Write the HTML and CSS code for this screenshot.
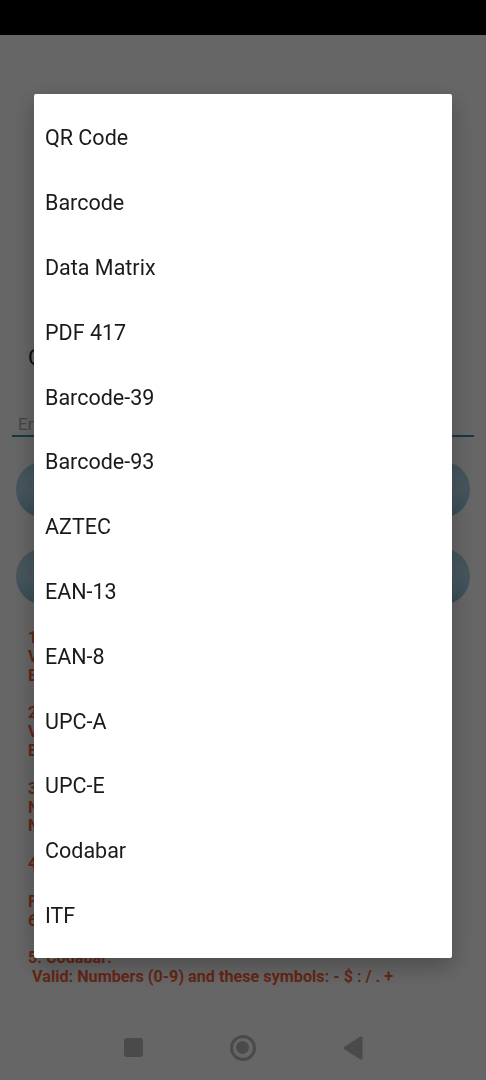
FILE: index.html
```html
<!DOCTYPE html>
<html>
<head>
  <meta charset="utf-8">
  <meta name="viewport" content="width=device-width,initial-scale=1">
  <title>Barcode generator</title>
  <link rel="stylesheet" href="styles.css">
</head>
<body>
  <div class="status"></div>

  <main class="app">
    <p class="label">Choose the code type</p>
    <div class="field"><span class="hint">Enter the text to encode</span></div>
    <button class="btn">Generate</button>
    <button class="btn">Save to gallery</button>

    <div class="rules">
      <p>1. QR Code, Data Matrix, PDF 417, AZTEC:
Valid: Any text, numbers and symbols
Example: https://www.example.com</p>
      <p>2. Barcode, Barcode-39, Barcode-93:
Valid: Letters (A-Z) and numbers (0-9)
Example: CODE-39</p>
      <p>3. EAN-13, EAN-8, UPC-A, UPC-E:
Numbers (0-9) only
Number of digits: 12, 7, 11, 7</p>
      <p>4. ITF:
      Valid: Numbers (0-9) only
For ITF the number of digits must be even
6, 8, 10, 12 or 14 digits</p>
      <p>5. Codabar:
 Valid: Numbers (0-9) and these symbols: - $ : / . +</p>
    </div>
  </main>

  <nav class="navbar">
    <span class="nav-recent"></span>
    <span class="nav-home"><span></span></span>
    <svg class="nav-back" width="20" height="24" viewBox="0 0 20 24">
      <polygon points="18,2 18,22 2,12" fill="#b8b8b8" stroke="#b8b8b8" stroke-width="3" stroke-linejoin="round"/>
    </svg>
  </nav>

  <div class="scrim">
    <ul class="dialog">
      <li>QR Code</li>
      <li>Barcode</li>
      <li>Data Matrix</li>
      <li>PDF 417</li>
      <li>Barcode-39</li>
      <li>Barcode-93</li>
      <li>AZTEC</li>
      <li>EAN-13</li>
      <li>EAN-8</li>
      <li>UPC-A</li>
      <li>UPC-E</li>
      <li>Codabar</li>
      <li>ITF</li>
    </ul>
  </div>
</body>
</html>
```

FILE: styles.css
```css
html, body {
  margin: 0;
  padding: 0;
}

* {
  box-sizing: border-box;
}

body {
  background: #fff;
  color: #212121;
  display: flex;
  flex-direction: column;
  font-family: Roboto, 'Liberation Sans', sans-serif;
  min-height: 100vh;
}

.status {
  background: #000;
  height: 35px;
  position: relative;
  z-index: 2;
}

.app {
  display: flex;
  flex-direction: column;
}

.label {
  font-size: 22px;
  line-height: 26px;
  margin: 310px 0 0 28px;
}

.field {
  border-bottom: 2px solid #2f8fb5;
  color: #aaa;
  font-size: 17px;
  line-height: 22px;
  margin: 42px 12px 0;
  padding: 0 6px;
}

.btn {
  background: radial-gradient(ellipse at 50% 40%, #eef8ff 0%, #c4e4f4 55%, #86b6cf 100%);
  border: 0;
  border-radius: 29px;
  color: #0d4a66;
  font-family: inherit;
  font-size: 18px;
  height: 57px;
  margin: 24px 16px 0;
}

.btn + .btn {
  margin-top: 30px;
}

.rules {
  color: #f85f3a;
  font-size: 16.2px;
  font-weight: 700;
  line-height: 18.85px;
  margin: 24px 0 0 28px;
}

.rules p {
  margin: 0 0 18.85px;
  white-space: pre;
}

.navbar {
  align-items: center;
  display: flex;
  gap: 84px;
  height: 65px;
  justify-content: center;
  margin-top: auto;
}

.nav-recent {
  background: #b8b8b8;
  border-radius: 3px;
  height: 19px;
  margin: 0 3px;
  width: 19px;
}

.nav-home {
  align-items: center;
  border: 3px solid #b8b8b8;
  border-radius: 50%;
  display: flex;
  height: 26px;
  justify-content: center;
  width: 26px;
}

.nav-home span {
  background: #b8b8b8;
  border-radius: 50%;
  height: 13px;
  width: 13px;
}

.nav-back {
  display: block;
  margin: 0 3px;
}

/* modal list dialog */
.scrim {
  background: rgba(0, 0, 0, .6);
  bottom: 0;
  left: 0;
  padding: 59px 0 0 34px;
  position: fixed;
  right: 0;
  top: 35px;
}

.dialog {
  background: #fff;
  border-radius: 2px;
  box-shadow: 0 8px 24px rgba(0, 0, 0, .28);
  list-style: none;
  margin: 0;
  padding: 11.6px 0 9.6px;
  width: 418px;
}

.dialog li {
  align-items: center;
  color: #1a1a1a;
  display: flex;
  font-size: 21.5px;
  height: 64.8px;
  padding: 0 11px;
}
```
